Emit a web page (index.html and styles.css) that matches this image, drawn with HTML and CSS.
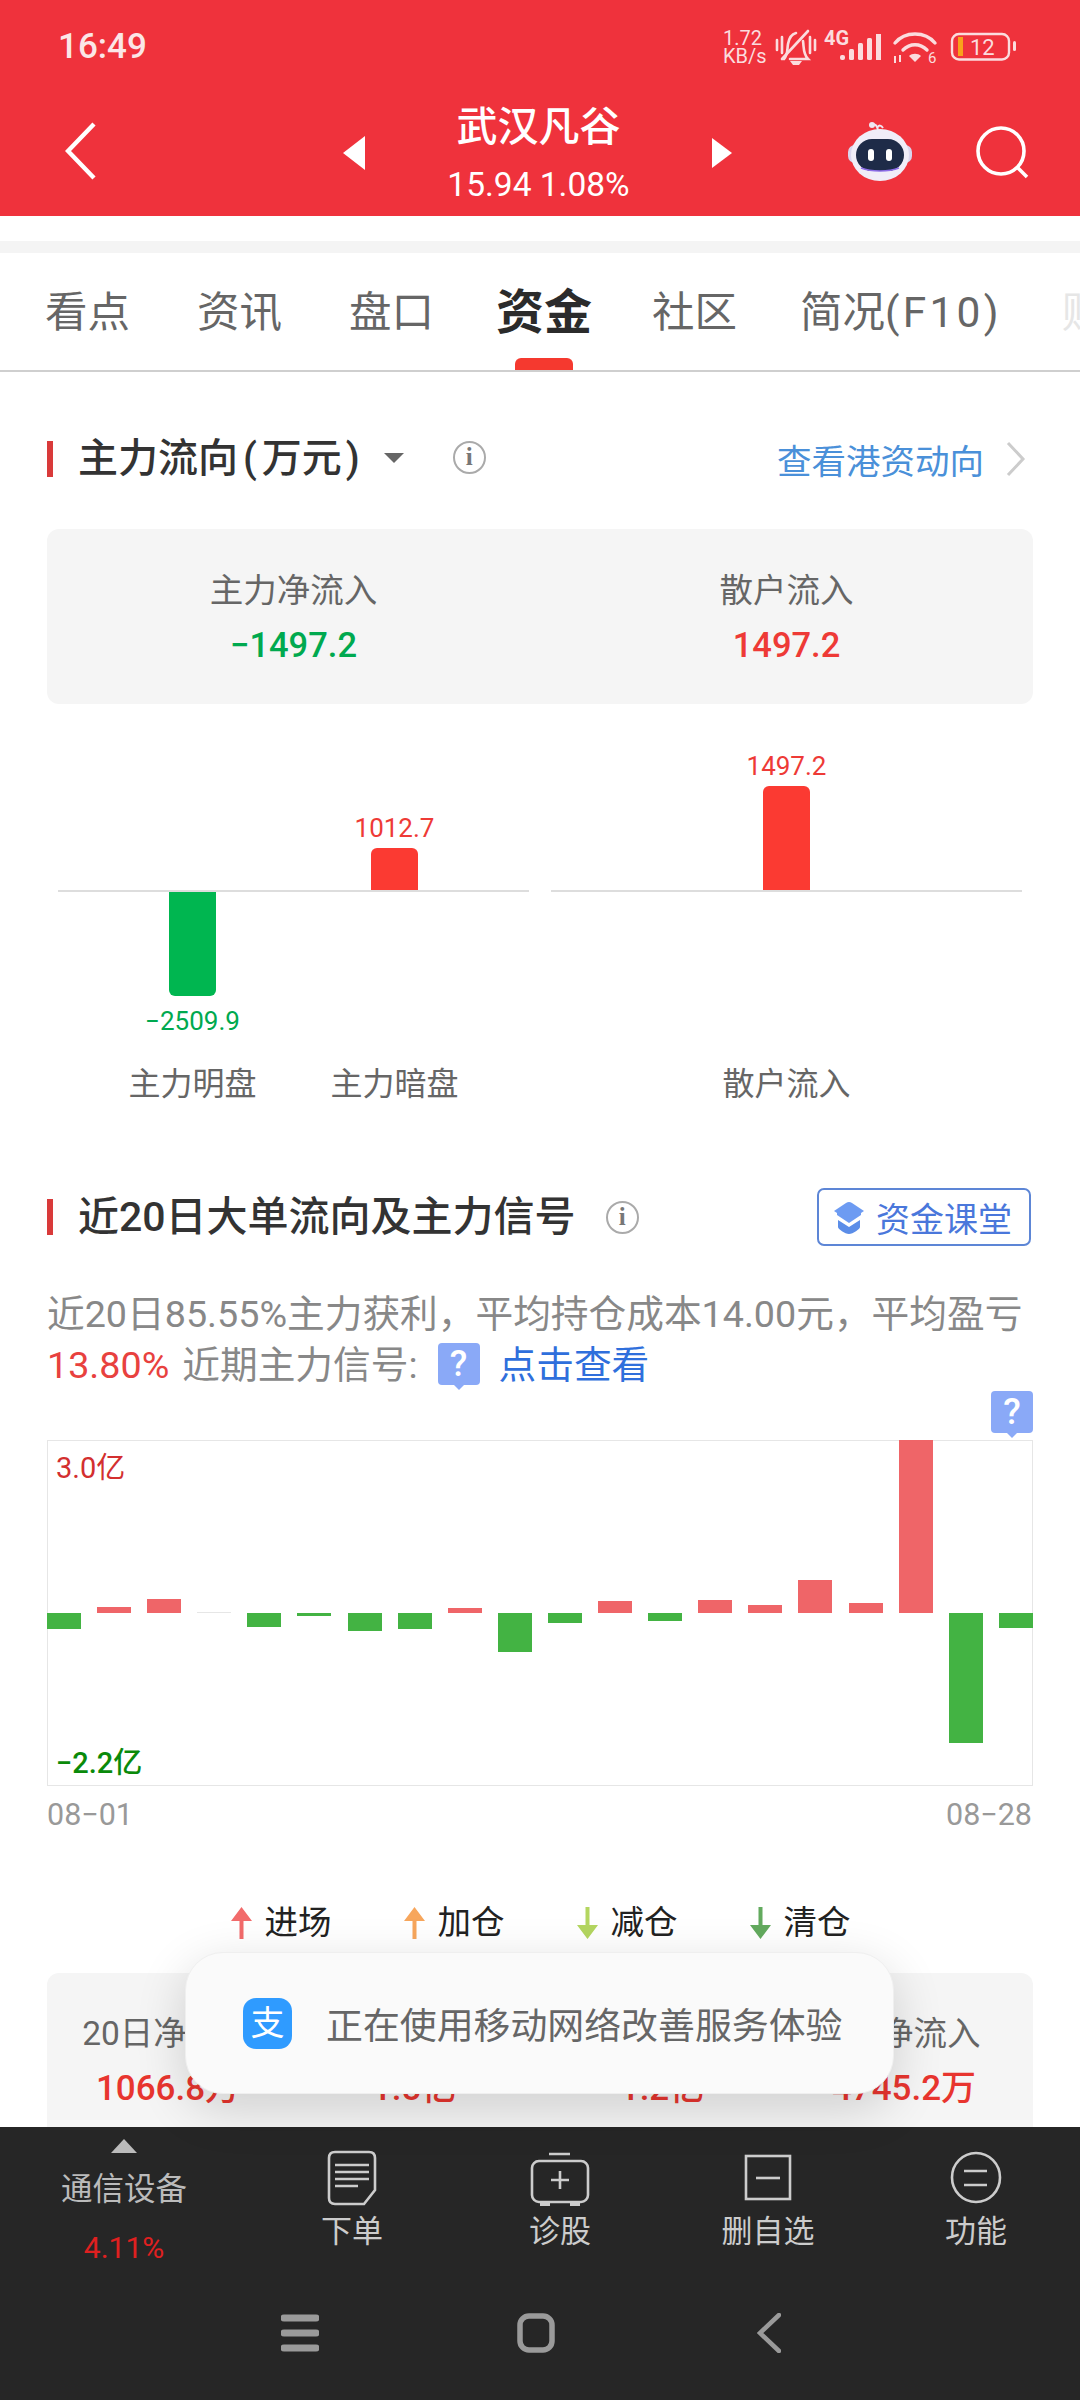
FILE: index.html
```html
<!DOCTYPE html>
<html lang="zh-CN">
<head>
<meta charset="utf-8">
<title>武汉凡谷</title>
<link rel="stylesheet" href="styles.css">
</head>
<body>
<div class="screen">
  <header class="header">
    <div class="status">
      <span class="time">16:49</span>
      <svg class="status-icons" viewBox="720 20 300 50" width="300" height="50">
        <text x="723" y="44" class="st-speed">1.72</text>
        <text x="723" y="62" class="st-speed">KB/s</text>
        <g fill="none" stroke="#fbdcde" stroke-width="2.600" stroke-linecap="round">
          <path d="M777 39v10M782 36v16M810 36v16M815 39v10"/>
          <path d="M784 58c4-4 3-9 4-15 1-6 4-10 8-11M803 40c1 7 0 13 5 18H790"/>
          <path d="M782 58 808 30"/>
        </g>
        <path d="M790 60h12l-3 4h-6z" fill="#fbdcde"/>
        <text x="824" y="44" class="st-net">4G</text>
        <g fill="#fbdcde">
          <rect x="840" y="54" width="5" height="5" rx="2"/>
          <rect x="849" y="48" width="5" height="11" rx="1.500"/>
          <rect x="858" y="42" width="5" height="17" rx="1.500"/>
          <rect x="867" y="37" width="5" height="22" rx="1.500"/>
          <rect x="876" y="33" width="5" height="26"/>
        </g>
        <g fill="none" stroke="#fbdcde" stroke-width="3.400" stroke-linecap="round">
          <path d="M895 42c10-12 30-12 40 0"/>
          <path d="M903 49c7-7 17-7 24 0"/>
        </g>
        <path d="M915 61l-6-6c3-3 9-3 12 0z" fill="#fbdcde"/>
        <path d="M895 55v7M900 54v7" stroke="#fbdcde" stroke-width="2"/>
        <text x="928" y="62" class="st-six">6</text>
        <rect x="952" y="33" width="57" height="25.500" rx="7" fill="none" stroke="#fbdcde" stroke-width="2.400"/>
        <rect x="958" y="36" width="5" height="19" fill="#f9a11b"/>
        <text x="970" y="54" class="st-batt">12</text>
        <rect x="1013" y="40" width="3" height="10" rx="1.500" fill="#fbdcde"/>
      </svg>
    </div>
    <div class="nav">
      <svg class="back" viewBox="0 0 32 58" width="32" height="58"><path d="M29 2 3 29l26 27" fill="none" stroke="#fff" stroke-width="4.400"/></svg>
      <div class="stock">
        <span class="tri tri-left"></span>
        <div class="stock-text">
          <div class="stock-name">武汉凡谷</div>
          <div class="stock-price">15.94 1.08%</div>
        </div>
        <span class="tri tri-right"></span>
      </div>
      <div class="nav-right">
        <svg class="robot" viewBox="0 0 64 60" width="64" height="60">
          <path d="M30 9c-1-4-2-6-6-6m6 3c1-2 3-2 5 1" fill="none" stroke="#efe6f2" stroke-width="2"/>
          <circle cx="24" cy="4" r="3" fill="#efe6f2"/>
          <rect x="0" y="24" width="64" height="18" rx="7" fill="#d9d5ee"/>
          <ellipse cx="32" cy="34" rx="29" ry="26" fill="#f0edf8"/>
          <rect x="8" y="18" width="48" height="32" rx="16" fill="#1e2b48"/>
          <path d="M13 47c10 4 28 4 38 0" stroke="#8d6de8" stroke-width="1.500" fill="none"/>
          <rect x="20" y="28" width="6" height="12" rx="3" fill="#fff"/>
          <rect x="38" y="28" width="6" height="12" rx="3" fill="#fff"/>
        </svg>
        <svg class="search" viewBox="0 0 54 54" width="54" height="54"><circle cx="25" cy="25" r="23" fill="none" stroke="#fff" stroke-width="3.600"/><path d="M41 41l10 10" stroke="#fff" stroke-width="3.600"/></svg>
      </div>
    </div>
  </header>

  <div class="gap-strip"></div>

  <nav class="tabs">
    <span class="tab">看点</span>
    <span class="tab">资讯</span>
    <span class="tab">盘口</span>
    <span class="tab tab-active">资金</span>
    <span class="tab">社区</span>
    <span class="tab">简况<span class="tab-latin">(F10)</span></span>
    <span class="tab tab-faded">财务</span>
  </nav>

  <main class="content">
    <section class="sec-head sec-head-first">
      <h2 class="sec-title">主力流向<span class="paren-l">(</span>万元<span class="paren-r">)</span></h2>
      <span class="dropdown"></span>
      <span class="info info-first">i</span>
      <a class="link">查看港资动向</a>
      <svg class="link-chev" viewBox="0 0 20 36" width="20" height="36"><path d="M2 2l15 16L2 34" fill="none" stroke="#ccc" stroke-width="3"/></svg>
    </section>

    <section class="summary">
      <div class="sum-col"><div class="sum-label">主力净流入</div><div class="sum-val green">−1497.2</div></div>
      <div class="sum-col"><div class="sum-label">散户流入</div><div class="sum-val red">1497.2</div></div>
    </section>

    <section class="flow">
      <div class="plot">
        <div class="plot-up">
          <div class="cell"></div>
          <div class="cell"><span class="bar-val red">1012.7</span><span class="bar bar-red" style="height:42px"></span></div>
        </div>
        <div class="plot-down">
          <div class="cell"><span class="bar bar-green" style="height:104px"></span><span class="bar-val bar-val-below green">−2509.9</span></div>
          <div class="cell"></div>
        </div>
        <div class="plot-labels"><span class="cell">主力明盘</span><span class="cell">主力暗盘</span></div>
      </div>
      <div class="plot">
        <div class="plot-up">
          <div class="cell"><span class="bar-val red">1497.2</span><span class="bar bar-red" style="height:104px"></span></div>
        </div>
        <div class="plot-down"></div>
        <div class="plot-labels"><span class="cell">散户流入</span></div>
      </div>
    </section>

    <section class="sec-head sec-head-second">
      <h2 class="sec-title">近20日大单流向及主力信号</h2>
      <span class="info info-second">i</span>
      <a class="course">
        <svg viewBox="0 0 32 36" width="32" height="36"><path d="M16 3c1 0 2 .5 3 1l12 8-3 2v2l-12 8-12-8v-2l-3-2 12-8c1-.5 2-1 3-1z" fill="#6d9bf2"/><path d="M5 21l11 7 11-7v7c0 2-7 7-11 7S5 30 5 28z" fill="#5b8de8"/></svg>
        <span>资金课堂</span>
      </a>
    </section>

    <p class="desc">近20日85.55%主力获利，平均持仓成本14.00元，平均盈亏<br><span class="desc-red">13.80%</span><span class="desc-near">近期主力信号:</span><span class="qmark qmark-inline">?</span><a class="desc-link">点击查看</a></p>

    <div class="marker-row"><span class="qmark">?</span></div>

    <div class="bars-chart">
      <span class="chart-max">3.0亿</span>
      <span class="chart-min">−2.2亿</span>
      <div class="bc"><div class="bc-up"></div><div class="bc-down"><i class="g" style="height:16px"></i></div></div>
      <div class="bc"><div class="bc-up"><i class="r" style="height:6px"></i></div><div class="bc-down"></div></div>
      <div class="bc"><div class="bc-up"><i class="r" style="height:14px"></i></div><div class="bc-down"></div></div>
      <div class="bc"><div class="bc-up"><i class="p" style="height:1px"></i></div><div class="bc-down"></div></div>
      <div class="bc"><div class="bc-up"></div><div class="bc-down"><i class="g" style="height:14px"></i></div></div>
      <div class="bc"><div class="bc-up"></div><div class="bc-down"><i class="g" style="height:3px"></i></div></div>
      <div class="bc"><div class="bc-up"></div><div class="bc-down"><i class="g" style="height:18px"></i></div></div>
      <div class="bc"><div class="bc-up"></div><div class="bc-down"><i class="g" style="height:16px"></i></div></div>
      <div class="bc"><div class="bc-up"><i class="r" style="height:5px"></i></div><div class="bc-down"></div></div>
      <div class="bc"><div class="bc-up"></div><div class="bc-down"><i class="g" style="height:39px"></i></div></div>
      <div class="bc"><div class="bc-up"></div><div class="bc-down"><i class="g" style="height:10px"></i></div></div>
      <div class="bc"><div class="bc-up"><i class="r" style="height:12px"></i></div><div class="bc-down"></div></div>
      <div class="bc"><div class="bc-up"></div><div class="bc-down"><i class="g" style="height:8px"></i></div></div>
      <div class="bc"><div class="bc-up"><i class="r" style="height:13px"></i></div><div class="bc-down"></div></div>
      <div class="bc"><div class="bc-up"><i class="r" style="height:8px"></i></div><div class="bc-down"></div></div>
      <div class="bc"><div class="bc-up"><i class="r" style="height:33px"></i></div><div class="bc-down"></div></div>
      <div class="bc"><div class="bc-up"><i class="r" style="height:10px"></i></div><div class="bc-down"></div></div>
      <div class="bc"><div class="bc-up"><i class="r" style="height:173px"></i></div><div class="bc-down"></div></div>
      <div class="bc"><div class="bc-up"></div><div class="bc-down"><i class="g" style="height:130px"></i></div></div>
      <div class="bc"><div class="bc-up"></div><div class="bc-down"><i class="g" style="height:15px"></i></div></div>
    </div>

    <div class="dates"><span>08−01</span><span>08−28</span></div>

    <div class="legend">
      <span class="leg"><svg viewBox="0 0 21 32" width="21" height="32"><path d="M10.500 0 21 14h-8.500v18h-4V14H0z" fill="#f26b6b"/></svg>进场</span>
      <span class="leg"><svg viewBox="0 0 21 32" width="21" height="32"><path d="M10.500 0 21 14h-8.500v18h-4V14H0z" fill="#f7a65c"/></svg>加仓</span>
      <span class="leg"><svg viewBox="0 0 21 32" width="21" height="32"><path d="M10.500 32 0 18h8.500V0h4v18H21z" fill="#b4d660"/></svg>减仓</span>
      <span class="leg"><svg viewBox="0 0 21 32" width="21" height="32"><path d="M10.500 32 0 18h8.500V0h4v18H21z" fill="#63aa5e"/></svg>清仓</span>
    </div>

    <section class="stats">
      <div class="stat"><div class="sum-label">20日净流入</div><div class="stat-val">1066.8万</div></div>
      <div class="stat"><div class="sum-label">10日净流入</div><div class="stat-val">1.5亿</div></div>
      <div class="stat"><div class="sum-label">3日净流入</div><div class="stat-val">1.2亿</div></div>
      <div class="stat"><div class="sum-label">1日净流入</div><div class="stat-val">4745.2万</div></div>
    </section>
  </main>

  <footer class="footer">
    <div class="actions">
      <div class="sector">
        <span class="sector-tri"></span>
        <span class="sector-name">通信设备</span>
        <span class="sector-val">4.11%</span>
      </div>
      <div class="action">
        <svg viewBox="0 0 64 56" width="64" height="56"><g fill="none" stroke="#ccc" stroke-width="2.600"><path d="M15 2h34q6 0 6 6v32L44 54H15q-6 0-6-6V8q0-6 6-6z"/><path d="M15 15h34M15 22h34M15 29h34M15 36h23"/></g></svg>
        <span>下单</span>
      </div>
      <div class="action">
        <svg viewBox="0 0 64 56" width="64" height="56"><g fill="none" stroke="#ccc" stroke-width="2.600"><rect x="4" y="11" width="56" height="41" rx="7"/><path d="M21 4h21M32 21v18M23 30h18"/></g><path d="M12 52h10v4H12zM42 52h10v4H42z" fill="#ccc"/></svg>
        <span>诊股</span>
      </div>
      <div class="action">
        <svg viewBox="0 0 64 56" width="64" height="56"><g fill="none" stroke="#ccc" stroke-width="2.600"><rect x="10" y="6" width="44" height="43"/><path d="M20 28h24"/></g></svg>
        <span>删自选</span>
      </div>
      <div class="action">
        <svg viewBox="0 0 64 56" width="64" height="56"><g fill="none" stroke="#ccc" stroke-width="2.600"><ellipse cx="32" cy="27.500" rx="24" ry="24.500"/><path d="M20 21h23M20 35h23"/></g></svg>
        <span>功能</span>
      </div>
    </div>
    <div class="sysnav">
      <svg viewBox="0 0 38 38" width="38" height="38"><path d="M3 4h32M3 19h32M3 34h32" stroke="#9a9a9a" stroke-width="7" stroke-linecap="round"/></svg>
      <svg viewBox="0 0 38 40" width="38" height="40"><rect x="3" y="3" width="32" height="34" rx="9" fill="none" stroke="#9a9a9a" stroke-width="5.500"/></svg>
      <svg viewBox="0 0 24 40" width="24" height="40"><path d="M22 2 3 20l19 18" fill="none" stroke="#9a9a9a" stroke-width="4.500" stroke-linecap="round"/></svg>
    </div>
  </footer>

  <div class="toast">
    <span class="alipay">支</span>
    <span class="toast-text">正在使用移动网络改善服务体验</span>
  </div>
</div>
</body>
</html>
```
FILE: styles.css
```css
* { box-sizing: border-box; }
html, body { margin: 0; padding: 0; background: #fff; }
body { font-family: Roboto, "Noto Sans CJK SC", sans-serif; }

.screen {
  position: relative;
  width: 1080px;
  height: 2400px;
  overflow: hidden;
  display: flex;
  flex-direction: column;
}

/* header */
.header { height: 216px; background: #ef323c; color: #fff; flex: none; }
.status {
  height: 92px;
  display: flex;
  align-items: center;
  justify-content: space-between;
  padding: 0 60px 0 58px;
}
.time { font-size: 35px; font-weight: 500; color: #fbe6e7; }
.status-icons { display: block; }
.st-speed { font-size: 20px; fill: #fbdcde; font-family: Roboto, sans-serif; }
.st-net { font-size: 20px; font-weight: 700; fill: #fbdcde; font-family: Roboto, sans-serif; }
.st-six { font-size: 15px; fill: #fbdcde; font-family: Roboto, sans-serif; }
.st-batt { font-size: 22px; fill: #fbdcde; font-family: Roboto, sans-serif; }

.nav {
  height: 124px;
  display: grid;
  grid-template-columns: 276px 391px 1fr;
  align-items: center;
  padding: 0 0 10px 65px;
}
.back { margin-top: 4px; }
.stock { display: flex; align-items: center; justify-content: space-between; margin-left: 2px; }
.tri { width: 0; height: 0; border-style: solid; margin-top: 8px; }
.tri-left { border-width: 17px 22px 17px 0; border-color: transparent #fff transparent transparent; }
.tri-right { border-width: 15px 0 15px 20px; border-color: transparent transparent transparent #fff; }
.stock-text { text-align: center; width: 184px; margin-top: 8px; }
.stock-name { font-size: 41px; line-height: 52px; font-weight: 500; margin-bottom: 11px; }
.stock-price { font-size: 33.500px; line-height: 42px; }
.nav-right { display: flex; align-items: center; padding-left: 116px; margin-top: 6px; }
.robot { margin-top: -2px; }
.search { margin-left: 64px; margin-top: 2px; }

.gap-strip { height: 37px; background: #fff; border-bottom: 12px solid #f4f4f4; flex: none; }

/* tabs */
.tabs {
  height: 119px;
  flex: none;
  display: flex;
  align-items: center;
  padding: 2px 0 0 45px;
  border-bottom: 2px solid #cfcfcf;
  overflow: hidden;
  white-space: nowrap;
}
.tab { font-size: 42.500px; color: #666; flex: none; margin-right: 65px; line-height: 50px; }
.tab:nth-child(1), .tab:nth-child(2) { margin-right: 67px; }
.tab:nth-child(3) { margin-right: 62px; }
.tab:nth-child(4) { margin-right: 60px; }
.tab:nth-child(5) { margin-right: 63px; }
.tab:nth-child(6) { margin-right: 60px; }
.tab-latin { letter-spacing: 3.200px; }
.tab-active {
  font-size: 48px;
  font-weight: 700;
  color: #2b2b2b;
  position: relative;
}
.tab-active::after {
  content: "";
  position: absolute;
  left: 19px;
  right: 19px;
  top: 70px;
  height: 13px;
  border-radius: 6px 6px 0 0;
  background: #f5392f;
}
.tab-faded { color: #e6e6e6; }

/* content */
.content { flex: 1; min-height: 0; overflow: hidden; padding: 0 47px; }
.sec-head { display: flex; align-items: center; }
.sec-head-first { height: 70px; margin-top: 52px; }
.sec-title {
  margin: 0;
  font-size: 40px;
  line-height: 36px;
  font-weight: 500;
  color: #333;
  border-left: 6px solid #d93a3a;
  padding-left: 25px;
  white-space: nowrap;
}
.paren-l { margin-left: 5px; letter-spacing: 5px; }
.paren-r { margin-left: 4px; }
.dropdown {
  width: 0; height: 0;
  margin-left: 24px;
  margin-top: -2px;
  border-style: solid;
  border-width: 10px 10px 0;
  border-color: #666 transparent transparent;
}
.info {
  width: 33px;
  height: 33px;
  border: 2.500px solid #aaa;
  border-radius: 50%;
  color: #777;
  font-size: 25px;
  font-weight: 700;
  line-height: 27px;
  text-align: center;
  font-family: "Liberation Serif", serif;
  flex: none;
}
.info-first { margin-left: 49px; margin-top: -3px; }
.info-second { margin-left: 30px; }
.link { margin-left: auto; font-size: 34.500px; color: #4a90d9; }
.link-chev { margin-left: 22px; margin-right: 7px; }

.summary {
  margin-top: 35px;
  height: 175px;
  background: #f5f5f5;
  border-radius: 12px;
  display: grid;
  grid-template-columns: 1fr 1fr;
  padding-top: 37px;
}
.sum-col { text-align: center; }
.sum-label { font-size: 33.500px; line-height: 50px; color: #666; }
.sum-val { font-size: 34.500px; line-height: 56px; font-weight: 500; margin-top: 1px; }
.green { color: #00a94f; }
.red { color: #ee3a36; }

/* flow chart */
.flow {
  display: grid;
  grid-template-columns: 1fr 1fr;
  gap: 22px;
  padding: 0 11px;
  margin-top: 36px;
}
.plot-up {
  height: 152px;
  display: flex;
  justify-content: center;
  border-bottom: 2px solid #ddd;
}
.plot-down { height: 172px; display: flex; justify-content: center; }
.cell {
  width: 202px;
  display: flex;
  flex-direction: column;
  align-items: center;
  flex: none;
}
.plot-up .cell { justify-content: flex-end; }
.bar { width: 47px; display: block; flex: none; }
.bar-red { background: #fb3a32; border-radius: 6px 6px 0 0; }
.bar-green { background: #00b650; border-radius: 0 0 6px 6px; }
.bar-val { font-size: 26px; line-height: 40px; }
.bar-val-below { margin-top: 5px; }
.plot-labels { display: flex; justify-content: center; font-size: 32px; line-height: 40px; color: #666; }
.plot-labels .cell { display: block; text-align: center; }

/* second section */
.sec-head-second { height: 58px; margin-top: 84px; }
.sec-head-second .sec-title { font-size: 41px; }
.course {
  margin-left: auto;
  margin-right: 2px;
  width: 214px;
  height: 58px;
  border: 2px solid #5d86d6;
  border-radius: 7px;
  display: flex;
  align-items: center;
  padding-left: 14px;
  font-size: 34px;
  color: #4a77db;
}
.course span { margin-left: 11px; }

.desc {
  margin: 43px 0 0;
  font-size: 37.700px;
  line-height: 51px;
  color: #888;
  white-space: nowrap;
}
.desc-red { color: #e8413e; }
.desc-near { margin-left: 13px; }
.desc-link { color: #2f6fdc; margin-left: 19px; }
.qmark {
  display: inline-block;
  width: 42px;
  height: 42px;
  background: #8aa9f7;
  color: #fff;
  font-size: 36px;
  line-height: 42px;
  font-weight: 500;
  text-align: center;
  border-radius: 4px;
  position: relative;
}
.qmark::after {
  content: "";
  position: absolute;
  left: 16px;
  top: 42px;
  border-style: solid;
  border-width: 5px 5px 0;
  border-color: #8aa9f7 transparent transparent;
}
.qmark-inline { vertical-align: 2px; margin-left: 20px; }

.marker-row { height: 49px; display: flex; justify-content: flex-end; }

.bars-chart {
  position: relative;
  height: 346px;
  display: flex;
  justify-content: space-between;
  box-shadow: inset 0 0 0 1px #e6e6e6;
}
.bc { width: 34px; display: flex; flex-direction: column; }
.bc-up { height: 173px; display: flex; align-items: flex-end; }
.bc-down { height: 173px; display: flex; align-items: flex-start; }
.bc i { display: block; width: 100%; }
.r { background: #ef6568; }
.g { background: #43b343; }
.p { background: #e6e6e6; }
.chart-max, .chart-min { position: absolute; left: 9px; font-size: 29px; line-height: 32px; }
.chart-max { top: 12px; color: #d32f2f; }
.chart-min { top: 307px; color: #0a8a0a; font-weight: 500; }

.dates {
  display: flex;
  justify-content: space-between;
  font-size: 30.500px;
  line-height: 40px;
  color: #999;
  margin: 9px 1px 0 0;
}

.legend {
  margin-top: 72px;
  margin-left: 1px;
  display: flex;
  justify-content: center;
  gap: 72px;
  height: 32px;
}
.leg { display: flex; align-items: center; gap: 13px; font-size: 33.500px; line-height: 32px; color: #222; }

.stats {
  margin-top: 34px;
  height: 200px;
  background: #f5f5f5;
  border-radius: 12px;
  display: flex;
  padding: 36px 0 0;
}
.stat { text-align: center; flex: none; }
.stat:nth-child(1) { width: 242px; }
.stat:nth-child(2) { width: 250px; }
.stat:nth-child(3) { width: 246px; }
.stat:nth-child(4) { width: 238px; }
.stat-val { font-size: 35px; line-height: 60px; color: #e8352f; font-weight: 500; }

/* footer */
.footer { height: 273px; flex: none; background: #262626; }
.actions { height: 158px; display: grid; grid-template-columns: 248px repeat(4, 208px); }
.sector { display: flex; flex-direction: column; align-items: center; padding-top: 12px; }
.sector-tri {
  width: 0; height: 0;
  border-style: solid;
  border-width: 0 13px 14px;
  border-color: transparent transparent #bbb;
}
.sector-name { font-size: 31.500px; line-height: 40px; color: #bbb; margin-top: 17px; }
.sector-val { font-size: 30px; line-height: 40px; color: #e02020; margin-top: 18px; }
.action {
  display: flex;
  flex-direction: column;
  align-items: center;
  padding-top: 23px;
  font-size: 31px;
  line-height: 40px;
  color: #ccc;
}
.action span { margin-top: 6px; }
.action svg { flex: none; }
.sysnav {
  display: flex;
  align-items: flex-start;
  padding: 29px 0 0 281px;
  gap: 198px;
}
.sysnav svg:nth-child(2) { margin-top: -1px; }
.sysnav svg:nth-child(3) { margin-top: -1px; margin-left: 4px; }

/* toast */
.toast {
  position: absolute;
  left: 185px;
  top: 1952px;
  width: 709px;
  height: 142px;
  background: #fafafa;
  border: 1px solid #efefef;
  border-radius: 38px;
  box-shadow: 0 14px 50px rgba(0, 0, 0, 0.16);
  display: flex;
  align-items: center;
  padding-left: 57px;
  gap: 34px;
}
.alipay {
  width: 49px;
  height: 51px;
  border-radius: 13px;
  background: #2f9bff;
  color: #fff;
  font-size: 34px;
  line-height: 50px;
  text-align: center;
}
.toast-text { font-size: 36.900px; color: #666; white-space: nowrap; }
```
